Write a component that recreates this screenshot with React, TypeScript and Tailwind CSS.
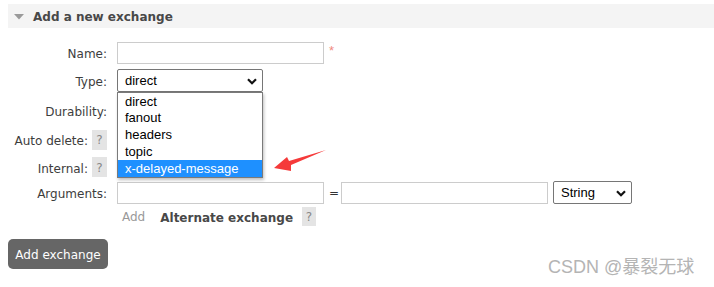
import React from "react";

const labelCls = "flex items-center justify-end pt-[3px] text-right";

function Help() {
  return (
    <span className="ml-[4px] inline-flex h-[20px] w-[15px] items-center justify-center bg-[#e4e4e4] pt-[1px] text-[12px] text-[#888]">
      ?
    </span>
  );
}

function Chevron() {
  return (
    <svg width="10" height="7" viewBox="0 0 10 7" className="shrink-0">
      <path d="M1 1.2 L5 5.2 L9 1.2" fill="none" stroke="#111" strokeWidth="2.2" />
    </svg>
  );
}

const options = ["direct", "fanout", "headers", "topic", "x-delayed-message"];

export default function App() {
  return (
    <div className="relative h-[287px] w-[714px] overflow-hidden bg-white font-['DejaVu_Sans',sans-serif] text-[12px] text-[#3d3d3d]">
      {/* Section header */}
      <div className="pt-[4px] pl-[8px]">
        <div className="flex h-[24px] items-center bg-[#f4f4f4] pl-[6px] pt-[1px]">
          <svg width="10" height="6" viewBox="0 0 10 6">
            <path d="M0 0 L10 0 L5 5.5 Z" fill="#9a9a9a" />
          </svg>
          <span className="ml-[9px] pt-[1px] font-bold text-[#484848]">Add a new exchange</span>
        </div>
      </div>

      {/* Form */}
      <div className="mt-[11px] grid grid-cols-[107px_1fr] gap-x-[10px]">
        {/* Name */}
        <div className={`${labelCls} h-[27px]`}>Name:</div>
        <div className="flex h-[27px] items-center">
          <div className="h-[22px] w-[207px] border border-[#cccccc]" />
          <span className="ml-[5px] -mt-[4px] font-['Liberation_Sans',sans-serif] text-[13px] text-[#f08a80]">*</span>
        </div>

        {/* Type */}
        <div className={`${labelCls} h-[29px]`}>Type:</div>
        <div className="flex h-[29px] items-center">
          <div className="relative">
            <div className="flex h-[23px] w-[146px] items-center justify-between rounded-[2px] border border-[#767676] pl-[7px] pr-[5px] pt-[1px] font-['Liberation_Sans',sans-serif] text-[13px] text-black">
              <span>direct</span>
              <Chevron />
            </div>
            {/* open dropdown */}
            <div className="absolute left-0 top-full z-10 w-[146px] border border-[#7a7a7a] bg-white font-['Liberation_Sans',sans-serif] text-[13px] text-black shadow-[1px_2px_3px_rgba(0,0,0,0.25)]">
              {options.map((o) => (
                <div
                  key={o}
                  className={
                    o === "x-delayed-message"
                      ? "flex h-[16.8px] items-center bg-[#1e90ff] pl-[7px] text-white"
                      : "flex h-[16.8px] items-center pl-[7px]"
                  }
                >
                  {o}
                </div>
              ))}
            </div>
          </div>
        </div>

        {/* Durability */}
        <div className={`${labelCls} h-[31px]`}>Durability:</div>
        <div className="h-[31px]" />

        {/* Auto delete */}
        <div className="flex h-[27px] items-center justify-end">
          <span className="pt-[3px]">Auto delete:</span>
          <Help />
        </div>
        <div className="h-[27px]" />

        {/* Internal */}
        <div className="flex h-[28px] items-center justify-end">
          <span className="pt-[3px]">Internal:</span>
          <Help />
        </div>
        <div className="h-[28px]" />

        {/* Arguments */}
        <div className={`${labelCls} h-[23px]`}>Arguments:</div>
        <div className="flex h-[23px] items-center">
          <div className="h-[22px] w-[207px] border border-[#cccccc]" />
          <span className="mx-[5px] w-[7px] text-center text-[#333]">=</span>
          <div className="h-[22px] w-[207px] border border-[#cccccc]" />
          <div className="ml-[5px] flex h-[23px] w-[79px] items-center justify-between rounded-[2px] border border-[#767676] pl-[7px] pr-[5px] pt-[1px] font-['Liberation_Sans',sans-serif] text-[13px] text-black">
            <span>String</span>
            <Chevron />
          </div>
        </div>

        {/* Add / Alternate exchange */}
        <div className="h-[25px]" />
        <div className="flex h-[25px] items-center">
          <span className="ml-[5px] text-[#999]">Add</span>
          <span className="ml-[15px] pt-[3px] font-bold text-[#484848]">Alternate exchange</span>
          <span className="ml-[9px] inline-flex h-[19px] w-[14px] items-center justify-center bg-[#e4e4e4] pt-[1px] text-[#888]">
            ?
          </span>
        </div>
      </div>

      <div className="mt-[10px] pl-[8px]">
        <button className="h-[30px] w-[100px] rounded-[5px] bg-[#666666] pt-[1px] text-[12px] text-white">
          Add exchange
        </button>
      </div>

      {/* red annotation arrow */}
      <svg className="absolute left-[270px] top-[146px]" width="60" height="30" viewBox="270 146 60 30">
        <polygon
          points="274,168 287,157 289,161 326,150 291,165 291,171"
          fill="#f53a3a"
        />
      </svg>

      {/* watermark */}
      <div className="absolute left-[548px] top-[255px] font-['Liberation_Sans','Noto_Sans_CJK_SC',sans-serif] text-[18px] leading-[24px] text-[#b4b4b4]">
        CSDN @暴裂无球
      </div>
    </div>
  );
}
